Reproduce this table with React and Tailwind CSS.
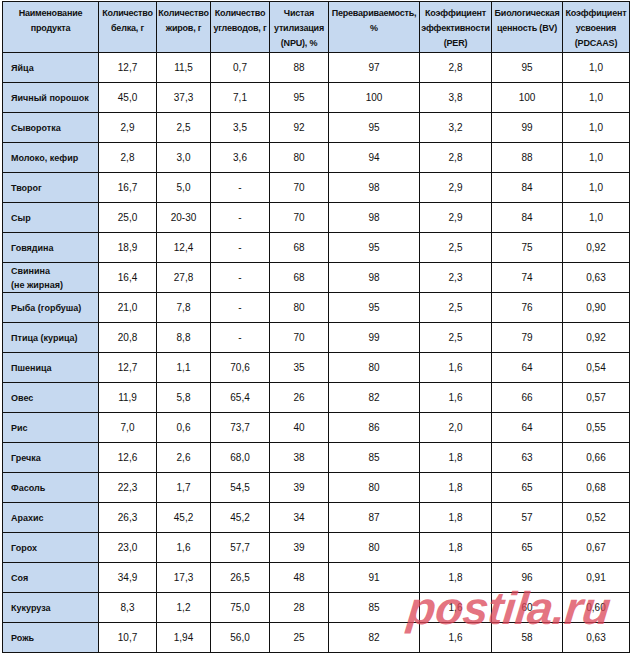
const headers = [
  "Наименование продукта",
  "Количество белка, г",
  "Количество жиров, г",
  "Количество углеводов, г",
  "Чистая утилизация (NPU), %",
  "Перевариваемость, %",
  "Коэффициент эффективности (PER)",
  "Биологическая ценность (BV)",
  "Коэффициент усвоения (PDCAAS)",
];

const widths = ["w-[96px]", "w-[58px]", "w-[54px]", "w-[59px]", "w-[59px]", "w-[91px]", "w-[72px]", "w-[71px]", "w-[67px]"];

const rows = [
  ["Яйца", "12,7", "11,5", "0,7", "88", "97", "2,8", "95", "1,0"],
  ["Яичный порошок", "45,0", "37,3", "7,1", "95", "100", "3,8", "100", "1,0"],
  ["Сыворотка", "2,9", "2,5", "3,5", "92", "95", "3,2", "99", "1,0"],
  ["Молоко, кефир", "2,8", "3,0", "3,6", "80", "94", "2,8", "88", "1,0"],
  ["Творог", "16,7", "5,0", "-", "70", "98", "2,9", "84", "1,0"],
  ["Сыр", "25,0", "20-30", "-", "70", "98", "2,9", "84", "1,0"],
  ["Говядина", "18,9", "12,4", "-", "68", "95", "2,5", "75", "0,92"],
  ["Свинина\n(не жирная)", "16,4", "27,8", "-", "68", "98", "2,3", "74", "0,63"],
  ["Рыба (горбуша)", "21,0", "7,8", "-", "80", "95", "2,5", "76", "0,90"],
  ["Птица (курица)", "20,8", "8,8", "-", "70", "99", "2,5", "79", "0,92"],
  ["Пшеница", "12,7", "1,1", "70,6", "35", "80", "1,6", "64", "0,54"],
  ["Овес", "11,9", "5,8", "65,4", "26", "82", "1,6", "66", "0,57"],
  ["Рис", "7,0", "0,6", "73,7", "40", "86", "2,0", "64", "0,55"],
  ["Гречка", "12,6", "2,6", "68,0", "38", "85", "1,8", "63", "0,66"],
  ["Фасоль", "22,3", "1,7", "54,5", "39", "80", "1,8", "65", "0,68"],
  ["Арахис", "26,3", "45,2", "45,2", "34", "87", "1,8", "57", "0,52"],
  ["Горох", "23,0", "1,6", "57,7", "39", "80", "1,8", "65", "0,67"],
  ["Соя", "34,9", "17,3", "26,5", "48", "91", "1,8", "96", "0,91"],
  ["Кукуруза", "8,3", "1,2", "75,0", "28", "85", "1,6", "60", "0,60"],
  ["Рожь", "10,7", "1,94", "56,0", "25", "82", "1,6", "58", "0,63"],
];

export default function App() {
  return (
    <div className="relative h-[653px] w-[630px] overflow-hidden bg-white pl-[2px] pt-[1px] font-['Liberation_Sans',Arial,sans-serif] text-[#111]">
      <table className="table-fixed border-collapse">
        <colgroup>
          {widths.map((w, i) => (
            <col key={i} className={w} />
          ))}
        </colgroup>
        <thead>
          <tr>
            {headers.map((h) => (
              <th
                key={h}
                className="h-[51px] border border-[#111] bg-[#c6d9f0] px-[1px] pt-[4px] align-top text-[9px] leading-[15px] font-bold tracking-[-0.2px]"
              >
                {h}
              </th>
            ))}
          </tr>
        </thead>
        <tbody>
          {rows.map(([name, ...vals]) => (
            <tr key={name}>
              <td className="h-[30px] whitespace-pre-line border border-[#111] bg-[#c6d9f0] pl-[8px] pr-[2px] text-left text-[9px] leading-[14px] font-bold">
                {name}
              </td>
              {vals.map((v, i) => (
                <td key={i} className="h-[30px] border border-[#111] text-center text-[10px]">
                  {v}
                </td>
              ))}
            </tr>
          ))}
        </tbody>
      </table>

      {/* watermark */}
      <div className="pointer-events-none absolute left-[408px] top-[580px] -skew-x-6 text-[46px] leading-[56px] font-black italic tracking-[-0.5px] text-[#dc4658]/75">
        postila.ru
      </div>
    </div>
  );
}
